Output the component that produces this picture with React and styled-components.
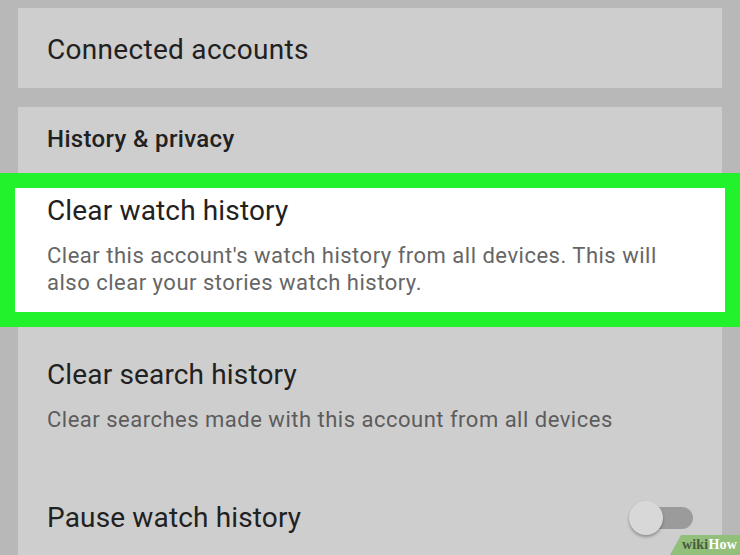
import React from 'react'
import styled, { createGlobalStyle } from 'styled-components'

const GlobalStyle = createGlobalStyle`
  html, body {
    margin: 0;
    padding: 0;
    background: #b8b8b8;
  }
  * {
    box-sizing: border-box;
  }
`;

const Page = styled.div`
  position: relative;
  width: 740px;
  height: 555px;
  overflow: hidden;
  background: #b8b8b8;
  padding: 8px 18px 0;
  font-family: Roboto, "Noto Sans", sans-serif;
  color: #212121;
`;

const Card = styled.div`
  background: #cecece;
  margin-bottom: 19px;
  ${(p) => p.$grow && 'height: 460px;'}
`;

const CardTitle = styled.div`
  font-size: 28px;
  line-height: 34px;
  letter-spacing: 0.3px;
  padding: 25px 29px 21px;
`;

const SectionTitle = styled.div`
  font-size: 24px;
  font-weight: 500;
  line-height: 26px;
  letter-spacing: 0.35px;
  padding: 19px 29px 21px;
`;

const Highlight = styled.div`
  margin: 0 -18px;
  border: 15px solid #22f22c;
  background: #fff;
  padding: 6px 32px 16px;
`;

const Item = styled.div`
  padding: ${(p) => p.$padding || '0 29px'};
  display: flex;
  align-items: center;
  justify-content: space-between;
`;

const ItemText = styled.div`
  display: flex;
  flex-direction: column;
`;

const ItemTitle = styled.div`
  font-size: 28px;
  line-height: 34px;
  letter-spacing: 0.15px;
  color: #212121;
`;

const ItemDesc = styled.div`
  font-size: 22px;
  line-height: 27px;
  letter-spacing: 0.5px;
  margin-top: 14px;
  white-space: nowrap;
  color: ${(p) => (p.$light ? '#666666' : '#5c5c5c')};
`;

const Switch = styled.div`
  position: relative;
  width: 64px;
  height: 34px;
  flex-shrink: 0;
`;

const Track = styled.div`
  position: absolute;
  left: 6px;
  right: 0;
  top: 6px;
  height: 22px;
  border-radius: 11px;
  background: #9b9b9b;
`;

const Thumb = styled.div`
  position: absolute;
  left: 0;
  top: 0;
  width: 34px;
  height: 34px;
  border-radius: 50%;
  background: #d8d8d8;
  box-shadow: 0 2px 3px rgba(0, 0, 0, 0.3);
`;

const Badge = styled.div`
  position: absolute;
  right: 0;
  bottom: 0;
  width: 70px;
  height: 20px;
  background: #92c07a;
  clip-path: polygon(11px 0, 100% 0, 100% 100%, 0 100%);
  display: flex;
  align-items: center;
  justify-content: flex-end;
  padding-right: 3px;
  font-family: "Liberation Serif", "DejaVu Serif", serif;
  font-weight: 700;
  font-size: 14px;
  letter-spacing: 0.2px;
`;

const Wiki = styled.span`
  color: #4a5a42;
`;

const How = styled.span`
  color: #ffffff;
`;

export default function App() {
  return (
    <>
      <GlobalStyle />
      <Page>
        <Card>
          <CardTitle>Connected accounts</CardTitle>
        </Card>

        <Card $grow>
          <SectionTitle>History &amp; privacy</SectionTitle>

          <Highlight>
            <ItemText>
              <ItemTitle>Clear watch history</ItemTitle>
              <ItemDesc $light>
                Clear this account's watch history from all devices. This will
                <br />
                also clear your stories watch history.
              </ItemDesc>
            </ItemText>
          </Highlight>

          <Item $padding="31px 29px 0">
            <ItemText>
              <ItemTitle>Clear search history</ItemTitle>
              <ItemDesc>Clear searches made with this account from all devices</ItemDesc>
            </ItemText>
          </Item>

          <Item $padding="68px 29px 0">
            <ItemTitle>Pause watch history</ItemTitle>
            <Switch>
              <Track />
              <Thumb />
            </Switch>
          </Item>
        </Card>

        <Badge>
          <Wiki>wiki</Wiki>
          <How>How</How>
        </Badge>
      </Page>
    </>
  )
}
